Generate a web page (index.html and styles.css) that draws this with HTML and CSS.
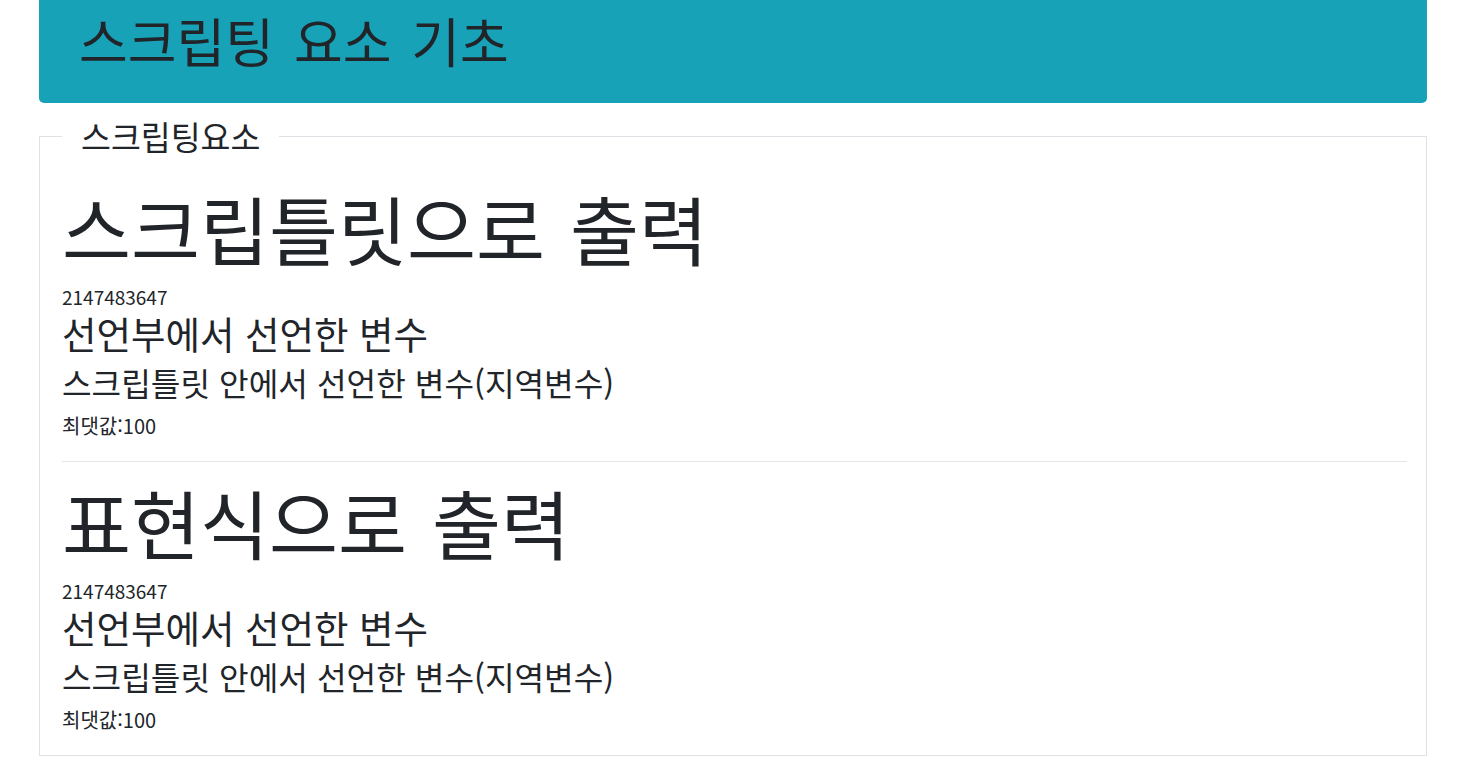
FILE: index.html
```html
<!DOCTYPE html>
<html lang="ko">
<head>
<meta charset="utf-8">
<title>스크립팅 요소 기초</title>
<link rel="stylesheet" href="styles.css">
</head>
<body>
<div class="container">
  <div class="jumbotron">
    <h1 class="jumbo-title">스크립팅 요소 기초</h1>
  </div>
  <fieldset class="box">
    <legend class="box-legend">스크립팅요소</legend>
    <section class="sec">
      <h1 class="big-title">스크립틀릿으로 출력</h1>
      <div class="num">2147483647</div>
      <h3 class="h3">선언부에서 선언한 변수</h3>
      <h4 class="h4">스크립틀릿 안에서 선언한 변수(지역변수)</h4>
      <div class="max">최댓값:100</div>
    </section>
    <hr class="divider">
    <section class="sec">
      <h1 class="big-title">표현식으로 출력</h1>
      <div class="num">2147483647</div>
      <h3 class="h3">선언부에서 선언한 변수</h3>
      <h4 class="h4">스크립틀릿 안에서 선언한 변수(지역변수)</h4>
      <div class="max">최댓값:100</div>
    </section>
  </fieldset>
</div>
</body>
</html>
```

FILE: styles.css
```css
html, body {
  margin: 0;
  padding: 0;
  background: #fff;
}
body {
  font-family: "Noto Sans CJK KR", "Noto Sans", sans-serif;
  color: #212529;
}
.container {
  margin: 0 35px 0 39px;
}
.jumbotron {
  background: #17a2b8;
  height: 103px;
  border-radius: 0 0 5px 5px;
  padding: 0 0 0 40px;
  box-sizing: border-box;
}
.jumbo-title {
  margin: 0;
  font-size: 53px;
  font-weight: 400;
  line-height: 80px;
  word-spacing: 5px;
}
.box {
  margin: 14px 0 0 0;
  border: 1px solid #dee2e6;
  padding: 29px 19px 21px 22px;
  min-width: 0;
}
.box-legend {
  padding: 0 19px;
  margin: 0;
  font-size: 32.5px;
  line-height: 38px;
  font-weight: 400;
}
.sec {
  display: flex;
  flex-direction: column;
}
.big-title {
  margin: 0 0 11px 0;
  font-size: 75px;
  font-weight: 400;
  line-height: 88px;
  word-spacing: 4px;
}
.num {
  font-size: 19px;
  line-height: 28px;
}
.h3 {
  margin: 0 0 8px 0;
  font-size: 37.5px;
  font-weight: 400;
  line-height: 44px;
}
.h4 {
  margin: 0 0 11px 0;
  font-size: 32.2px;
  font-weight: 400;
  line-height: 38px;
}
.max {
  font-size: 20px;
  line-height: 28px;
}
.divider {
  border: 0;
  border-top: 1px solid rgba(0, 0, 0, 0.1);
  margin: 21px 0 16px 0;
}
```
